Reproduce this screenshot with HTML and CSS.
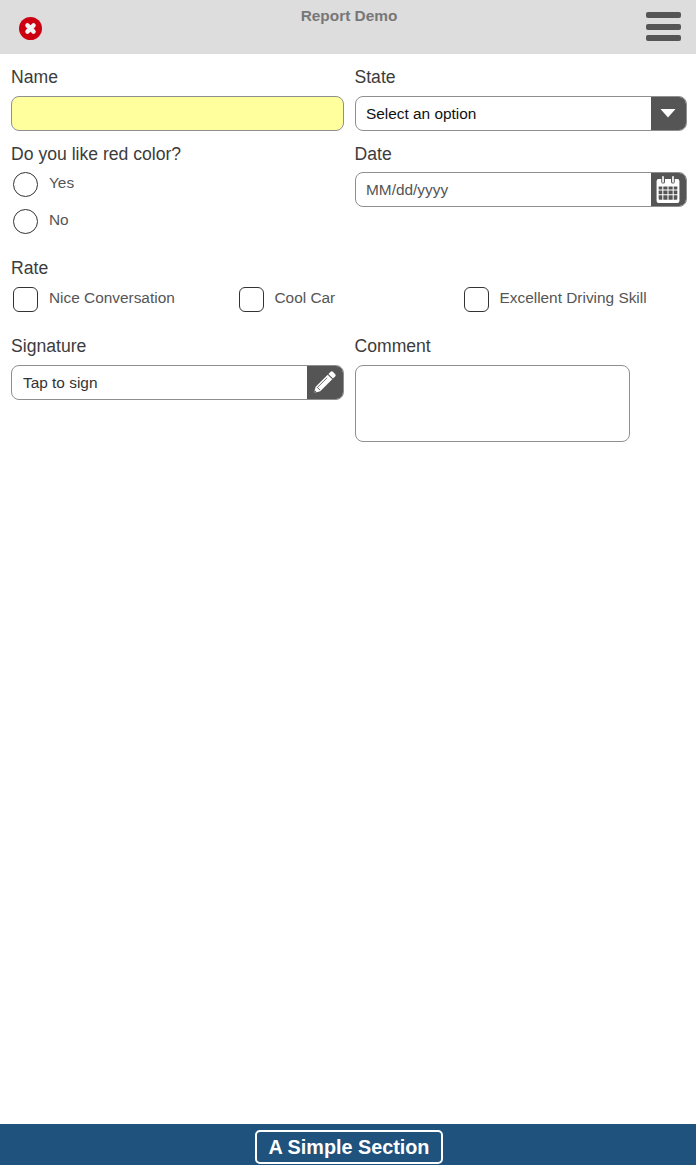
FILE: index.html
```html
<!DOCTYPE html>
<html lang="en">
<head>
<meta charset="utf-8">
<title>Report Demo</title>
<link rel="stylesheet" href="styles.css">
</head>
<body>
<div class="page">
  <header class="topbar">
    <svg class="close-icon" viewBox="0 0 24 24" aria-hidden="true"><circle cx="12" cy="12" r="12" fill="#cc0011"/><path d="M8.800 8.800l6.400 6.400M15.200 8.800l-6.400 6.400" stroke="#f2f2f2" stroke-width="4.600" stroke-linecap="round"/></svg>
    <div class="title">Report Demo</div>
    <div class="menu"><span></span><span></span><span></span></div>
  </header>
  <main class="form">
    <div class="row">
      <div class="field">
        <label class="label">Name</label>
        <input class="control required" type="text">
      </div>
      <div class="field">
        <label class="label">State</label>
        <div class="control group">
          <span class="value dark">Select an option</span>
          <span class="addon"><svg class="caret" viewBox="0 0 16 9" aria-hidden="true"><path d="M0.500 0h15L8 8.500z" fill="#fff"/></svg></span>
        </div>
      </div>
    </div>
    <div class="row second">
      <div class="field">
        <label class="label tight">Do you like red color?</label>
        <div class="choice radio-row"><span class="radio"></span><span class="option">Yes</span></div>
        <div class="choice radio-row"><span class="radio"></span><span class="option">No</span></div>
      </div>
      <div class="field">
        <label class="label tight">Date</label>
        <div class="control group">
          <span class="value">MM/dd/yyyy</span>
          <span class="addon"><svg class="calendar" viewBox="1 0 22 26" aria-hidden="true"><path fill="#fff" fill-rule="evenodd" d="M3 3h2.500v2.500a1.800 1.800 0 0 0 3.600 0V3h5.800v2.500a1.800 1.800 0 0 0 3.600 0V3H21a2 2 0 0 1 2 2v19a2 2 0 0 1-2 2H3a2 2 0 0 1-2-2V5a2 2 0 0 1 2-2zM3 10v3h3.500v-3zM7.500 10v3h4v-3zM12.500 10v3h4v-3zM17.500 10v3H21v-3zM3 14v3.500h3.500V14zM7.500 14v3.500h4V14zM12.500 14v3.500h4V14zM17.500 14v3.500H21V14zM3 18.500V22a.800.800 0 0 0 .800.800h2.700v-4.300zM7.500 18.500v4.300h4v-4.300zM12.500 18.500v4.300h4v-4.300zM17.500 18.500v4.300h2.700A.800.800 0 0 0 21 22v-3.500z"/><rect x="6.400" y="0" width="1.600" height="6.500" rx=".8" fill="#fff"/><rect x="16" y="0" width="1.600" height="6.500" rx=".8" fill="#fff"/></svg></span>
        </div>
      </div>
    </div>
    <section class="rate">
      <label class="label">Rate</label>
      <div class="checks">
        <div class="choice"><span class="check"></span><span class="option">Nice Conversation</span></div>
        <div class="choice"><span class="check"></span><span class="option">Cool Car</span></div>
        <div class="choice"><span class="check"></span><span class="option">Excellent Driving Skill</span></div>
      </div>
    </section>
    <div class="row third">
      <div class="field">
        <label class="label">Signature</label>
        <div class="control group">
          <span class="value sign">Tap to sign</span>
          <span class="addon"><svg class="pencil" viewBox="0 0 24 24" aria-hidden="true"><path fill="#fff" d="M18.200 1a2 2 0 0 1 2.800 0l2 2a2 2 0 0 1 0 2.800l-2.100 2.100-4.800-4.800z"/><path fill="#fff" d="M15.300 3.900l4.800 4.800L7.600 21.200 1 23l1.800-6.600z"/><path fill="none" stroke="#555" stroke-width=".9" d="M4 16.600l3.400 3.400M14.700 7.100l-9.500 9.500"/><path fill="#555" d="M1 23l.8-3 2.200 2.200z"/></svg></span>
        </div>
      </div>
      <div class="field">
        <label class="label">Comment</label>
        <textarea class="comment"></textarea>
      </div>
    </div>
  </main>
  <footer class="footer">
    <button class="section-btn" type="button">A Simple Section</button>
  </footer>
</div>
</body>
</html>
```
FILE: styles.css
```css
* { box-sizing: border-box; }
html, body { margin: 0; padding: 0; background: #fff; }
body { font-family: "Liberation Sans", Arial, sans-serif; color: #3c3c3c; }
.page { display: flex; flex-direction: column; height: 1165px; overflow: hidden; }

.topbar {
  height: 54px; flex: none; background: #dddddd;
  display: grid; grid-template-columns: 1fr auto 1fr; align-items: start;
  padding: 0 15px 0 17px;
}
.close-icon { width: 23px; height: 23px; margin: 17px 0 0 2px; }
.title { font-size: 15.4px; line-height: 16px; font-weight: 700; color: #777; margin-top: 8px; }
.menu { justify-self: end; display: flex; flex-direction: column; gap: 5.5px; margin-top: 12px; width: 35px; }
.menu span { display: block; height: 6px; border-radius: 2px; background: #555; }

.form { flex: 1; padding-top: 12px; }
.row { display: grid; grid-template-columns: 332.5px 332.5px; column-gap: 11px; padding-left: 11px; }
.second { margin-top: 12px; min-height: 102px; }
.third { margin-top: 23px; }
.field { display: flex; flex-direction: column; min-width: 0; }
.label { display: block; font-size: 17.6px; line-height: 22px; color: #3c3c3c; margin-bottom: 8px; }
.label.tight { margin-bottom: 7px; }

.control {
  height: 35px; width: 100%; border: 1px solid #8f8f8f; border-radius: 8px;
  background: #fff; font: 15.4px "Liberation Sans", Arial, sans-serif;
}
.required { background: #ffff9e; padding: 0 11px; outline: none; }
.group { display: flex; align-items: stretch; overflow: hidden; }
.value { flex: 1; line-height: 33px; padding-left: 10.5px; color: #555; font-size: 15.4px; }
.value.dark { color: #111; }
.value.sign { color: #333; padding-left: 11px; }
.addon { flex: none; width: 35.5px; background: #555; display: flex; align-items: center; justify-content: center; }
.caret { width: 16px; height: 9px; }
.calendar { width: 24px; height: 27px; }
.pencil { width: 23px; height: 23px; }

.choice { display: flex; align-items: flex-start; margin-left: 2px; }
.radio-row { height: 37px; }
.radio, .check { flex: none; width: 25px; height: 25px; border: 1px solid #333; background: #fff; }
.radio { border-radius: 50%; }
.check { border-radius: 6px; }
.option { font-size: 15.4px; line-height: 20px; color: #555; margin-left: 11px; margin-top: 1px; white-space: nowrap; }

.rate { padding-left: 11px; margin-top: 11px; }
.checks { display: grid; grid-template-columns: 225.5px 225px 1fr; }

.comment {
  display: block; width: 275px; height: 77px; border: 1px solid #8f8f8f; border-radius: 8px;
  background: #fff; resize: none; outline: none;
}

.footer {
  height: 41px; flex: none; background: #1f527c;
  display: flex; justify-content: center; align-items: flex-end; padding-left: 2px;
}
.section-btn {
  width: 188px; height: 34px; margin-bottom: 1px; padding: 0;
  border: 2px solid #fff; border-radius: 5px; background: transparent; color: #fff;
  font: 700 19.8px/30px "Liberation Sans", Arial, sans-serif;
}
```
